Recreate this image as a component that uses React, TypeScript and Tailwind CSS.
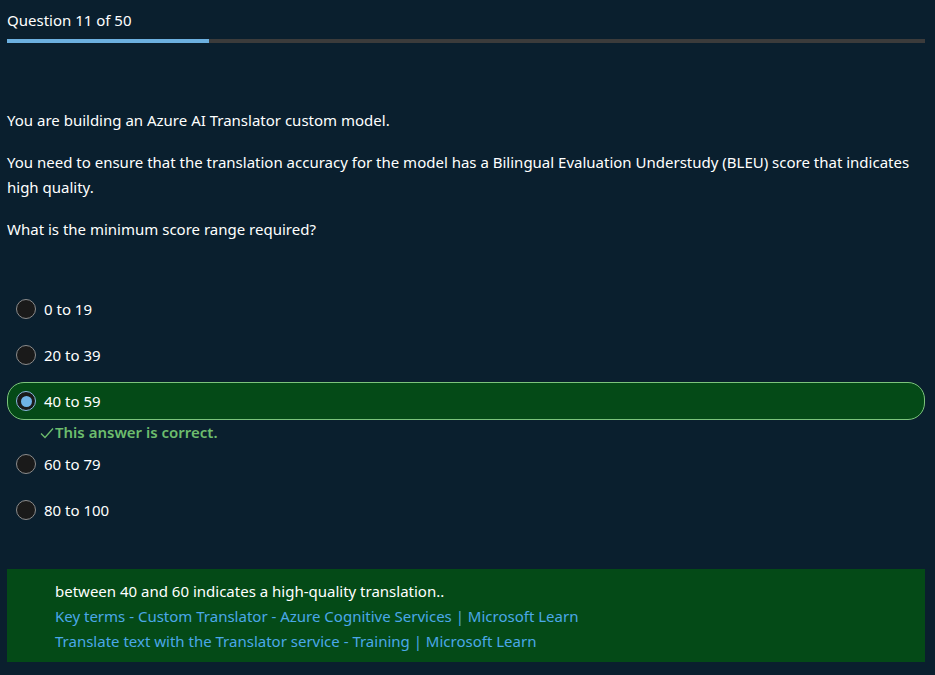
import { useState } from 'react'

const options = ['0 to 19', '20 to 39', '40 to 59', '60 to 79', '80 to 100']
const correctIndex = 2

function Radio({ checked }: { checked: boolean }) {
  if (checked) {
    return (
      <span className="flex h-[20px] w-[20px] shrink-0 items-center justify-center rounded-full border border-[#8ab8de] bg-[#1a1a1a]">
        <span className="h-[11px] w-[11px] rounded-full bg-[#6fb3e6]" />
      </span>
    )
  }
  return <span className="h-[20px] w-[20px] shrink-0 rounded-full border border-[#8c8c8c] bg-[#1a1a1a]" />
}

export default function App() {
  const [selected, setSelected] = useState(correctIndex)

  return (
    <div
      className="min-h-[675px] w-full bg-[#0a1f2e] text-[15px] text-white"
      style={{ fontFamily: '"Noto Sans", "Open Sans", sans-serif' }}
    >
      <div className="pl-[7px] pr-[10px] pt-[9px]">
        <div className="leading-[22px]">Question 11 of 50</div>
        <div className="mt-[8px] h-[4px] w-full bg-[#3b3b3b]">
          <div className="h-full w-[22%] bg-[#6cb0e0]" />
        </div>

        {/* Question */}
        <div className="mt-[65px] space-y-[17px] leading-[25px]">
          <p>You are building an Azure AI Translator custom model.</p>
          <p>
            You need to ensure that the translation accuracy for the model has a Bilingual Evaluation Understudy
            (BLEU) score that indicates high quality.
          </p>
          <p>What is the minimum score range required?</p>
        </div>

        {/* Options */}
        <div className="mt-[48px] flex flex-col">
          {options.map((opt, i) => {
            const isSel = selected === i
            return (
              <div key={opt} className={i < options.length - 1 && !isSel ? 'mb-[8px]' : ''}>
                <button
                  type="button"
                  onClick={() => setSelected(i)}
                  className={`flex h-[38px] w-full items-center gap-[8px] rounded-[17px] border pl-[8px] text-left ${
                    isSel ? 'border-[#7cc47c] bg-[#044a17]' : 'border-transparent'
                  }`}
                >
                  <Radio checked={isSel} />
                  <span className="leading-[22px]">{opt}</span>
                </button>
                {isSel && i === correctIndex && (
                  <div className="flex h-[25px] items-center pl-[33px] font-semibold text-[#6dbd6d]">
                    <svg width="14" height="12" viewBox="0 0 14 12" className="mr-[1px]">
                      <path d="M1 6.5 L5 10.5 L13 1.5" fill="none" stroke="#6dbd6d" strokeWidth="1.3" />
                    </svg>
                    This answer is correct.
                  </div>
                )}
              </div>
            )
          })}
        </div>

        {/* Explanation */}
        <div className="mt-[40px] bg-[#044a17] px-[48px] pt-[10px] pb-[8px] leading-[25px]">
          <p>between 40 and 60 indicates a high-quality translation..</p>
          <a href="#" className="block text-[#4ba8e8]">
            Key terms - Custom Translator - Azure Cognitive Services | Microsoft Learn
          </a>
          <a href="#" className="block text-[#4ba8e8]">
            Translate text with the Translator service - Training | Microsoft Learn
          </a>
        </div>
      </div>
    </div>
  )
}
